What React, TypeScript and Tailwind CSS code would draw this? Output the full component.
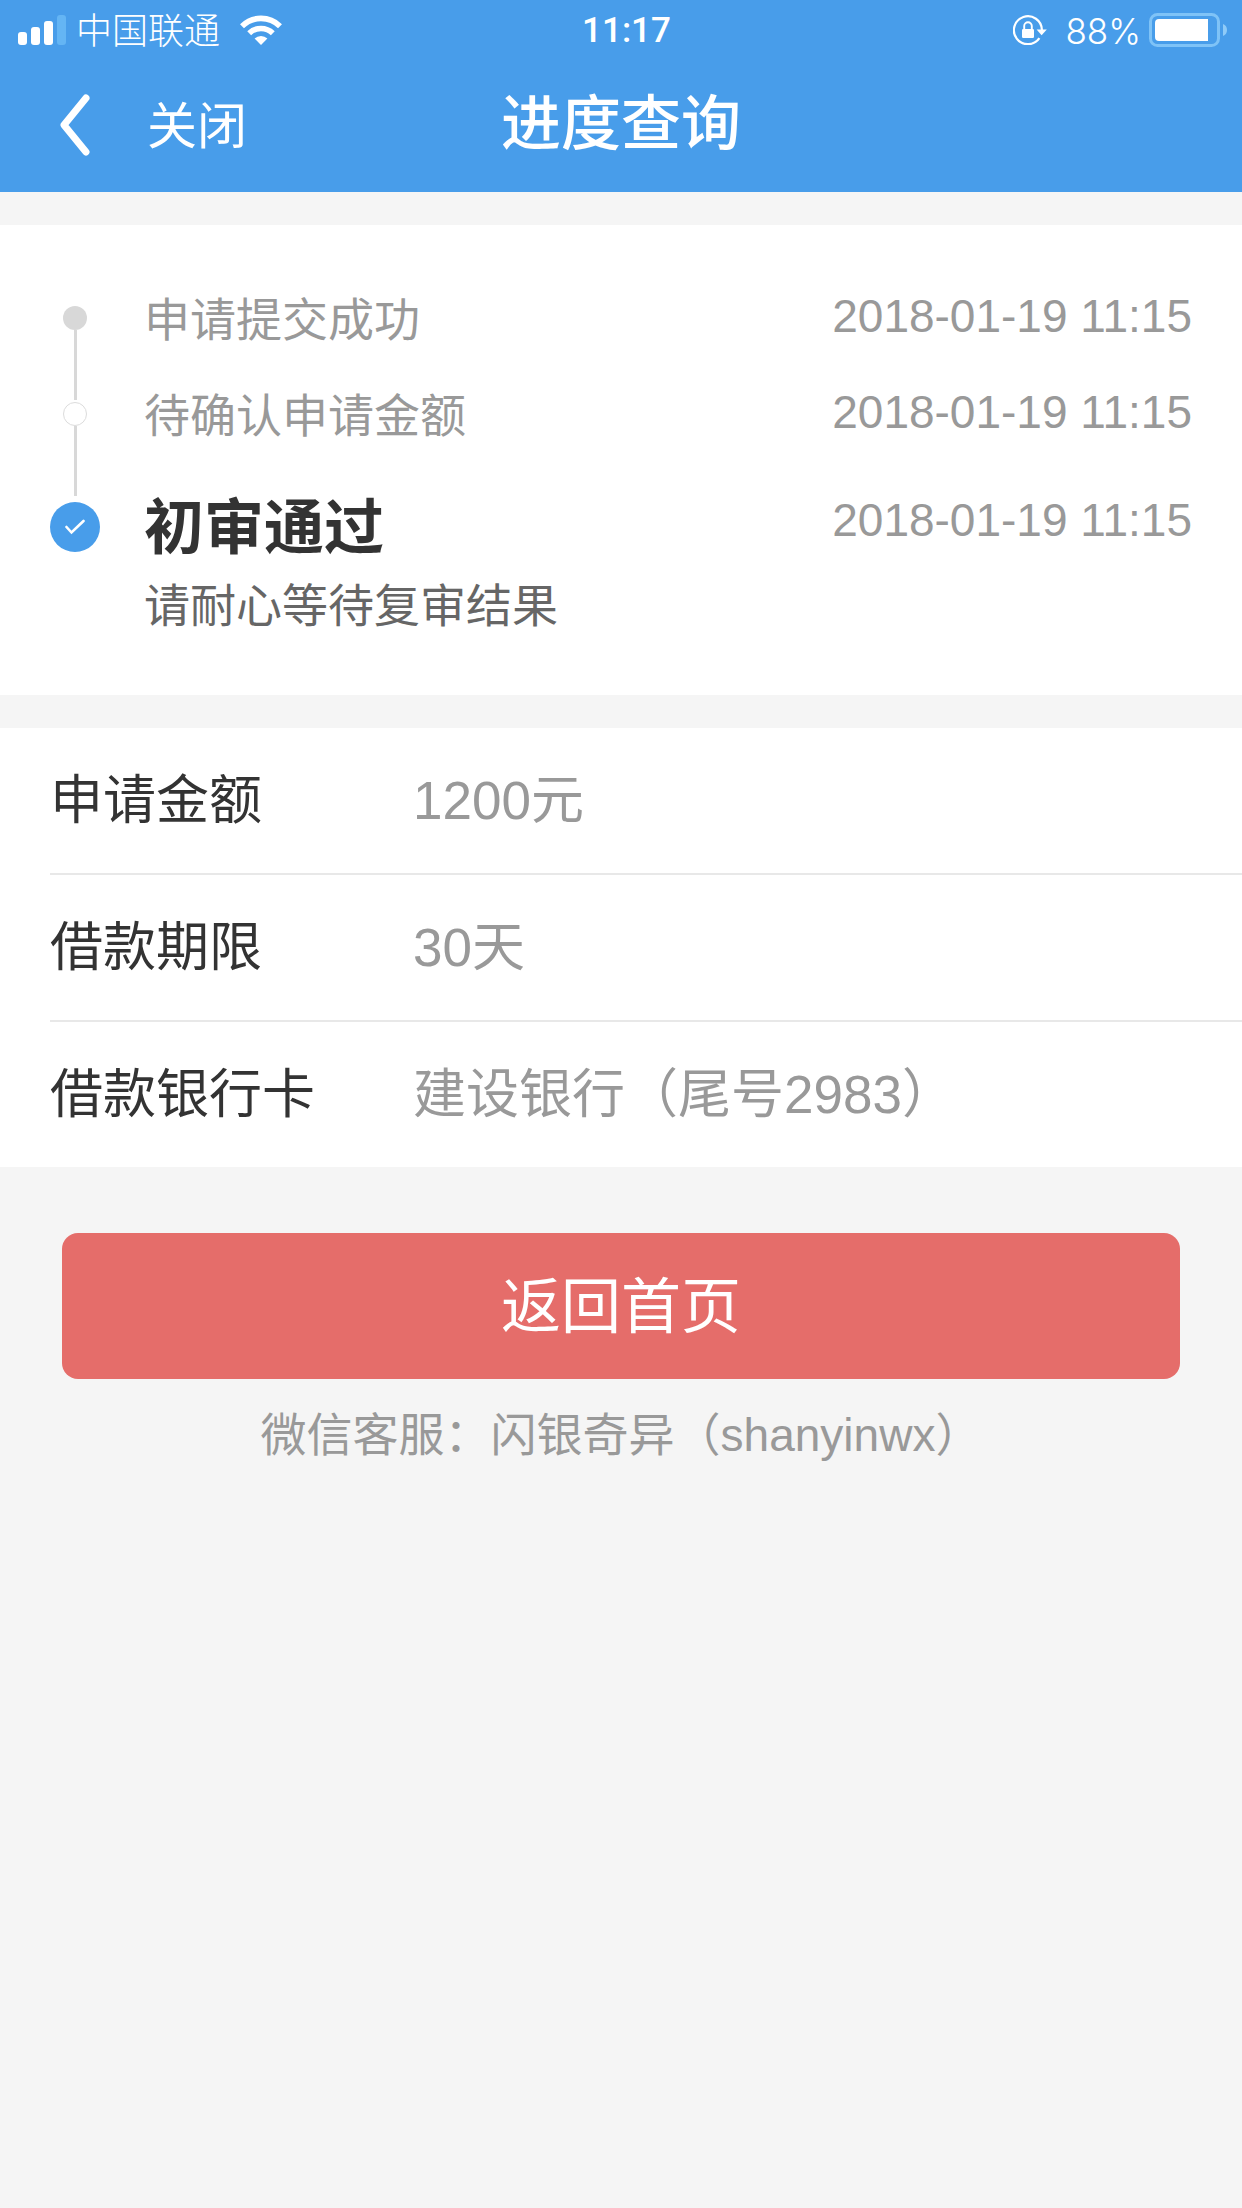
import { clsx } from "clsx";

const steps = [
  { title: "申请提交成功", time: "2018-01-19 11:15", state: "done" },
  { title: "待确认申请金额", time: "2018-01-19 11:15", state: "passed" },
  {
    title: "初审通过",
    time: "2018-01-19 11:15",
    state: "current",
    note: "请耐心等待复审结果",
  },
];

const details = [
  { label: "申请金额", value: "1200元" },
  { label: "借款期限", value: "30天" },
  { label: "借款银行卡", value: "建设银行（尾号2983）" },
];

function SignalIcon() {
  return (
    <svg width="48" height="30" viewBox="0 0 48 30" fill="#fff" aria-hidden="true">
      <rect x="0" y="17" width="9" height="13" rx="3" />
      <rect x="13" y="12" width="9" height="18" rx="3" />
      <rect x="26" y="6" width="9" height="24" rx="3" />
      <rect x="39" y="0" width="9" height="30" rx="3" fill="#64b5f4" />
    </svg>
  );
}

function WifiIcon() {
  return (
    <svg width="42" height="30" viewBox="0 0 42 30" aria-hidden="true">
      <g fill="none" stroke="#fff" strokeWidth="5.6">
        <path d="M2 11.2A27 27 0 0 1 40 11.2" />
        <path d="M9.2 18.2A17 17 0 0 1 32.8 18.2" />
      </g>
      <path d="M21 30L14.6 23.6A9 9 0 0 1 27.4 23.6Z" fill="#fff" />
    </svg>
  );
}

function RotationLockIcon() {
  return (
    <svg width="34" height="30" viewBox="0 0 34 30" aria-hidden="true">
      <path
        d="M26.4 23.2A14 14 0 1 1 28.9 15"
        fill="none"
        stroke="#fff"
        strokeWidth="2.2"
      />
      <path d="M23.6 14.4H33.8L28.6 20.2Z" fill="#fff" />
      <rect x="9" y="14" width="12" height="9" rx="1.2" fill="#fff" />
      <path
        d="M11.2 14.5V11A3.8 3.8 0 0 1 18.8 11V14.5"
        fill="none"
        stroke="#fff"
        strokeWidth="1.9"
      />
    </svg>
  );
}

function BatteryIcon() {
  return (
    <svg width="78" height="34" viewBox="0 0 78 34" aria-hidden="true">
      <rect
        x="1.5"
        y="1.5"
        width="68"
        height="31"
        rx="7"
        fill="none"
        stroke="#7fc3f7"
        strokeWidth="3"
      />
      <path d="M10 6H59V28H10A4 4 0 0 1 6 24V10A4 4 0 0 1 10 6Z" fill="#fff" />
      <path d="M74 11A6.5 6.5 0 0 1 74 23Z" fill="#8fcbf8" />
    </svg>
  );
}

function StatusBar() {
  return (
    <div className="grid h-[60px] grid-cols-[1fr_auto_1fr] items-center pr-[15px] pl-[18px] font-[Inter,'Noto_Sans_CJK_SC',sans-serif] text-[36px] leading-[58px]">
      <div className="flex items-center">
        <SignalIcon />
        <span className="ml-[10px] pt-0.5 font-light">中国联通</span>
        <span className="ml-5">
          <WifiIcon />
        </span>
      </div>
      <span className="pt-0.5 pl-2 font-[Roboto,sans-serif] text-[35px] font-medium">
        11:17
      </span>
      <div className="flex items-center justify-end">
        <RotationLockIcon />
        <span className="ml-[18px] pt-0.5 text-[35px] font-light">88%</span>
        <span className="ml-2">
          <BatteryIcon />
        </span>
      </div>
    </div>
  );
}

function NavBar() {
  return (
    <div className="grid h-[132px] grid-cols-[1fr_auto_1fr] items-start">
      <div className="flex items-center pl-[60px]">
        <button type="button" aria-label="返回" className="h-[130px] w-[87px]">
          <svg width="32" height="62" viewBox="0 0 32 62" aria-hidden="true">
            <path
              d="M26 4L4 31L26 58"
              fill="none"
              stroke="#fff"
              strokeWidth="7"
              strokeLinecap="round"
              strokeLinejoin="round"
            />
          </svg>
        </button>
        <button type="button" className="pt-1 text-[50px] leading-[126px]">
          关闭
        </button>
      </div>
      <h1 className="text-[60px] leading-[130px] font-medium">进度查询</h1>
    </div>
  );
}

function StepMarker({ state }: { state: string }) {
  if (state === "current") {
    return (
      <span className="flex size-[50px] items-center justify-center rounded-full bg-[#489dea]">
        <svg width="20" height="16" viewBox="0 0 20 16" aria-hidden="true">
          <path
            d="M1.5 8L6.5 13.5L18.5 2"
            fill="none"
            stroke="#fff"
            strokeWidth="2.6"
            strokeLinecap="round"
          />
        </svg>
      </span>
    );
  }
  return (
    <>
      <span
        className={clsx(
          "size-6 shrink-0 rounded-full",
          state === "done" ? "bg-[#d8d8d8]" : "border border-[#dcdcdc] bg-white"
        )}
      />
      <span className="mb-0.5 w-[3px] flex-1 bg-[#d8d8d8]" />
    </>
  );
}

function Timeline() {
  return (
    <ol className="mt-[33px] bg-white px-[50px] pt-[81px] pb-[59px] text-[46px] text-[#999]">
      {steps.map((step) => {
        const current = step.state === "current";
        return (
          <li
            key={step.title}
            className={clsx("flex items-stretch", current ? "mt-1" : "h-24")}
          >
            <div className="flex w-[50px] flex-col items-center">
              <StepMarker state={step.state} />
            </div>
            <div className="ml-11 flex-1">
              {current ? (
                <h2 className="text-[60px] leading-[54px] font-bold text-[#333]">
                  {step.title}
                </h2>
              ) : (
                <p className="leading-7">{step.title}</p>
              )}
              {step.note && (
                <p className="mt-5 leading-[60px] text-[#666]">{step.note}</p>
              )}
            </div>
            <time className={current ? "leading-9" : "leading-5"}>{step.time}</time>
          </li>
        );
      })}
    </ol>
  );
}

function LoanDetails() {
  return (
    <dl className="mt-[33px] bg-white pl-[50px] text-[53px] leading-[145px]">
      {details.map((item) => (
        <div
          key={item.label}
          className="flex border-b-2 border-[#e8e8e8] last:border-b-0"
        >
          <dt className="w-[363px] text-[#333]">{item.label}</dt>
          <dd className="text-[#999]">{item.value}</dd>
        </div>
      ))}
    </dl>
  );
}

export default function App() {
  return (
    <div
      lang="zh-CN"
      className="min-h-screen bg-[#f5f5f5] font-['Liberation_Sans','Noto_Sans_CJK_SC',sans-serif]"
    >
      <header className="bg-[#489dea] text-white">
        <StatusBar />
        <NavBar />
      </header>
      <main>
        <Timeline />
        <LoanDetails />
        <div className="px-[62px] pt-[66px] text-center">
          <button
            type="button"
            className="w-full rounded-2xl bg-[#e56d6a] pt-1 text-[60px] leading-[142px] text-white"
          >
            返回首页
          </button>
          <p className="mt-[26px] text-[46px] leading-[60px] text-[#999]">
            微信客服：闪银奇异（shanyinwx）
          </p>
        </div>
      </main>
    </div>
  );
}
